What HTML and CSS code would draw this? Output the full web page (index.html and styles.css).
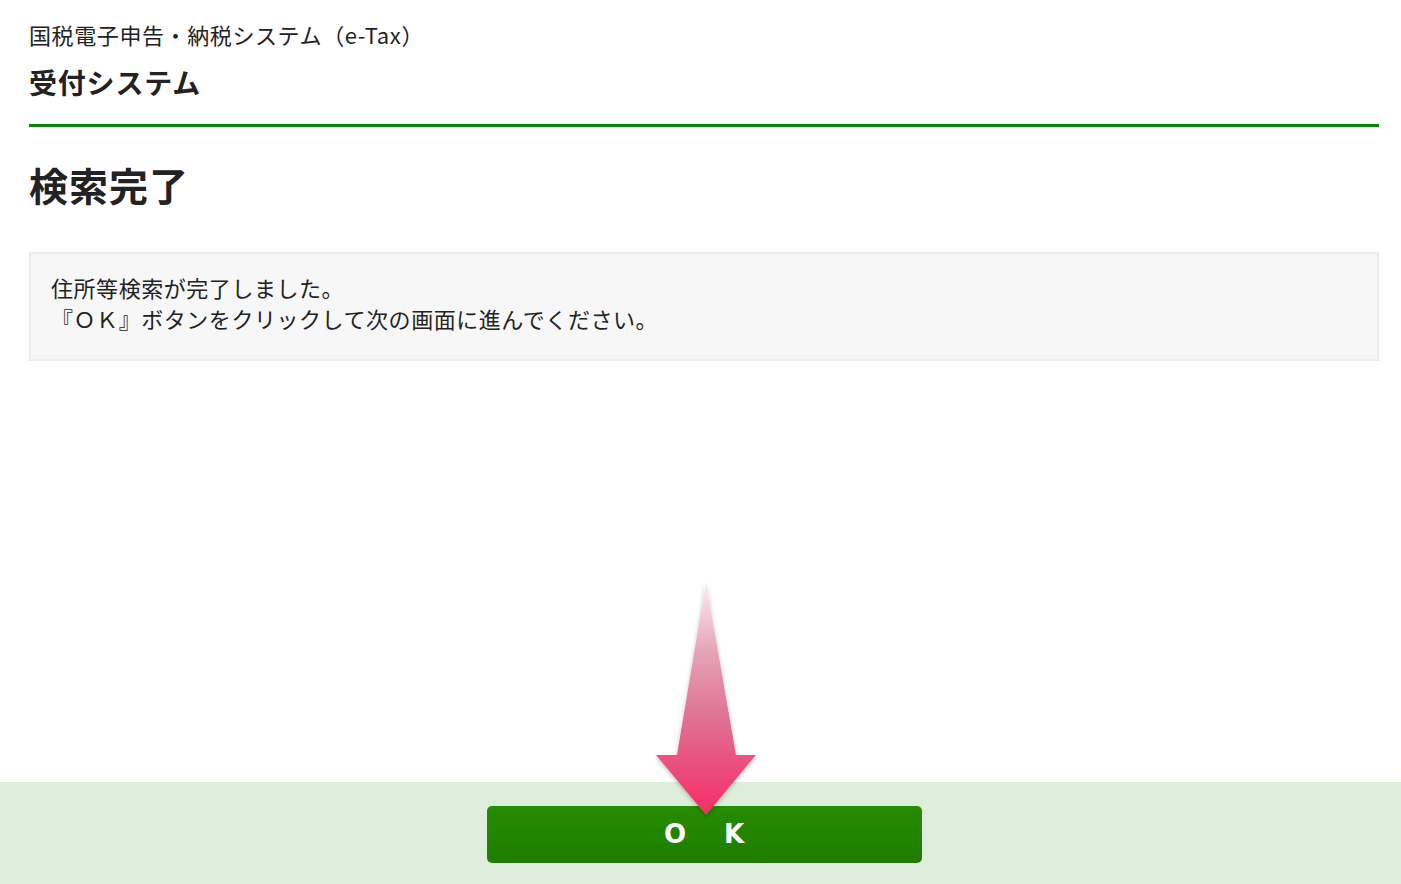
FILE: index.html
```html
<!DOCTYPE html>
<html lang="ja">
<head>
  <meta charset="UTF-8">
  <title>受付システム - 検索完了</title>
  <link rel="stylesheet" href="styles.css">
</head>
<body>
  <div class="page">
    <div class="content">
      <header class="header">
        <p class="site-name">国税電子申告・納税システム（e-Tax）</p>
        <p class="system-name">受付システム</p>
      </header>

      <h1 class="page-title">検索完了</h1>

      <div class="message">
        住所等検索が完了しました。<br>
        『ＯＫ』ボタンをクリックして次の画面に進んでください。
      </div>
    </div>

    <footer class="actions">
      <button class="ok">O　K</button>
    </footer>

    <!-- pointer arrow over the OK button -->
    <svg class="pointer" width="110" height="245" viewBox="0 0 110 245">
      <defs>
        <linearGradient id="arrowFill" x1="0" y1="0" x2="0" y2="1">
          <stop offset="0" stop-color="#fbeef2"/>
          <stop offset="0.3" stop-color="#e6a3b7"/>
          <stop offset="0.6" stop-color="#df6f91"/>
          <stop offset="1" stop-color="#f72b67"/>
        </linearGradient>
        <filter id="arrowShadow" x="-20%" y="-10%" width="140%" height="130%">
          <feDropShadow dx="0" dy="2" stdDeviation="2" flood-color="#000" flood-opacity="0.25"/>
        </filter>
      </defs>
      <path d="M51 4 L22 177 L1 177 L51 237 L101 177 L81 177 Z" fill="url(#arrowFill)" filter="url(#arrowShadow)"/>
    </svg>
  </div>
</body>
</html>
```

FILE: styles.css
```css
body {
  margin: 0;
  font-family: "Noto Sans CJK JP", "Noto Sans", sans-serif;
  color: #222;
  background: #fff;
}

.page {
  position: relative;
  min-height: 100vh;
  display: flex;
  flex-direction: column;
}

.content {
  padding: 18px 22px 0 29px;
}

.header {
  border-bottom: 3px solid #008a00;
  padding-bottom: 21px;
}

.site-name {
  margin: 0;
  font-size: 22px;
  line-height: 33px;
  letter-spacing: 0.6px;
}

.system-name {
  margin: 10px 0 0;
  font-size: 28px;
  font-weight: bold;
  line-height: 42px;
  letter-spacing: 0.8px;
}

.page-title {
  margin: 29px 0 39px;
  font-size: 39px;
  font-weight: bold;
  line-height: 57px;
  letter-spacing: 1px;
}

.message {
  background: #f7f7f7;
  border: 2px solid #ececec;
  padding: 18px 20px 25px;
  font-size: 22px;
  line-height: 31px;
  letter-spacing: 0.55px;
}

.actions {
  margin-top: auto;
  height: 102px;
  box-sizing: border-box;
  padding: 24px 22px 0 29px;
  background: #dfeedb;
  display: flex;
  justify-content: center;
  align-items: flex-start;
}

.ok {
  width: 435px;
  height: 57px;
  padding: 0 0 0 6px;
  border: none;
  border-radius: 5px;
  background: linear-gradient(#268c00, #1e7d00);
  color: #fff;
  font-family: "DejaVu Sans", sans-serif;
  font-size: 26px;
  font-weight: bold;
  letter-spacing: 6px;
  cursor: pointer;
}

.pointer {
  position: absolute;
  left: 655px;
  top: 578px;
}
```
